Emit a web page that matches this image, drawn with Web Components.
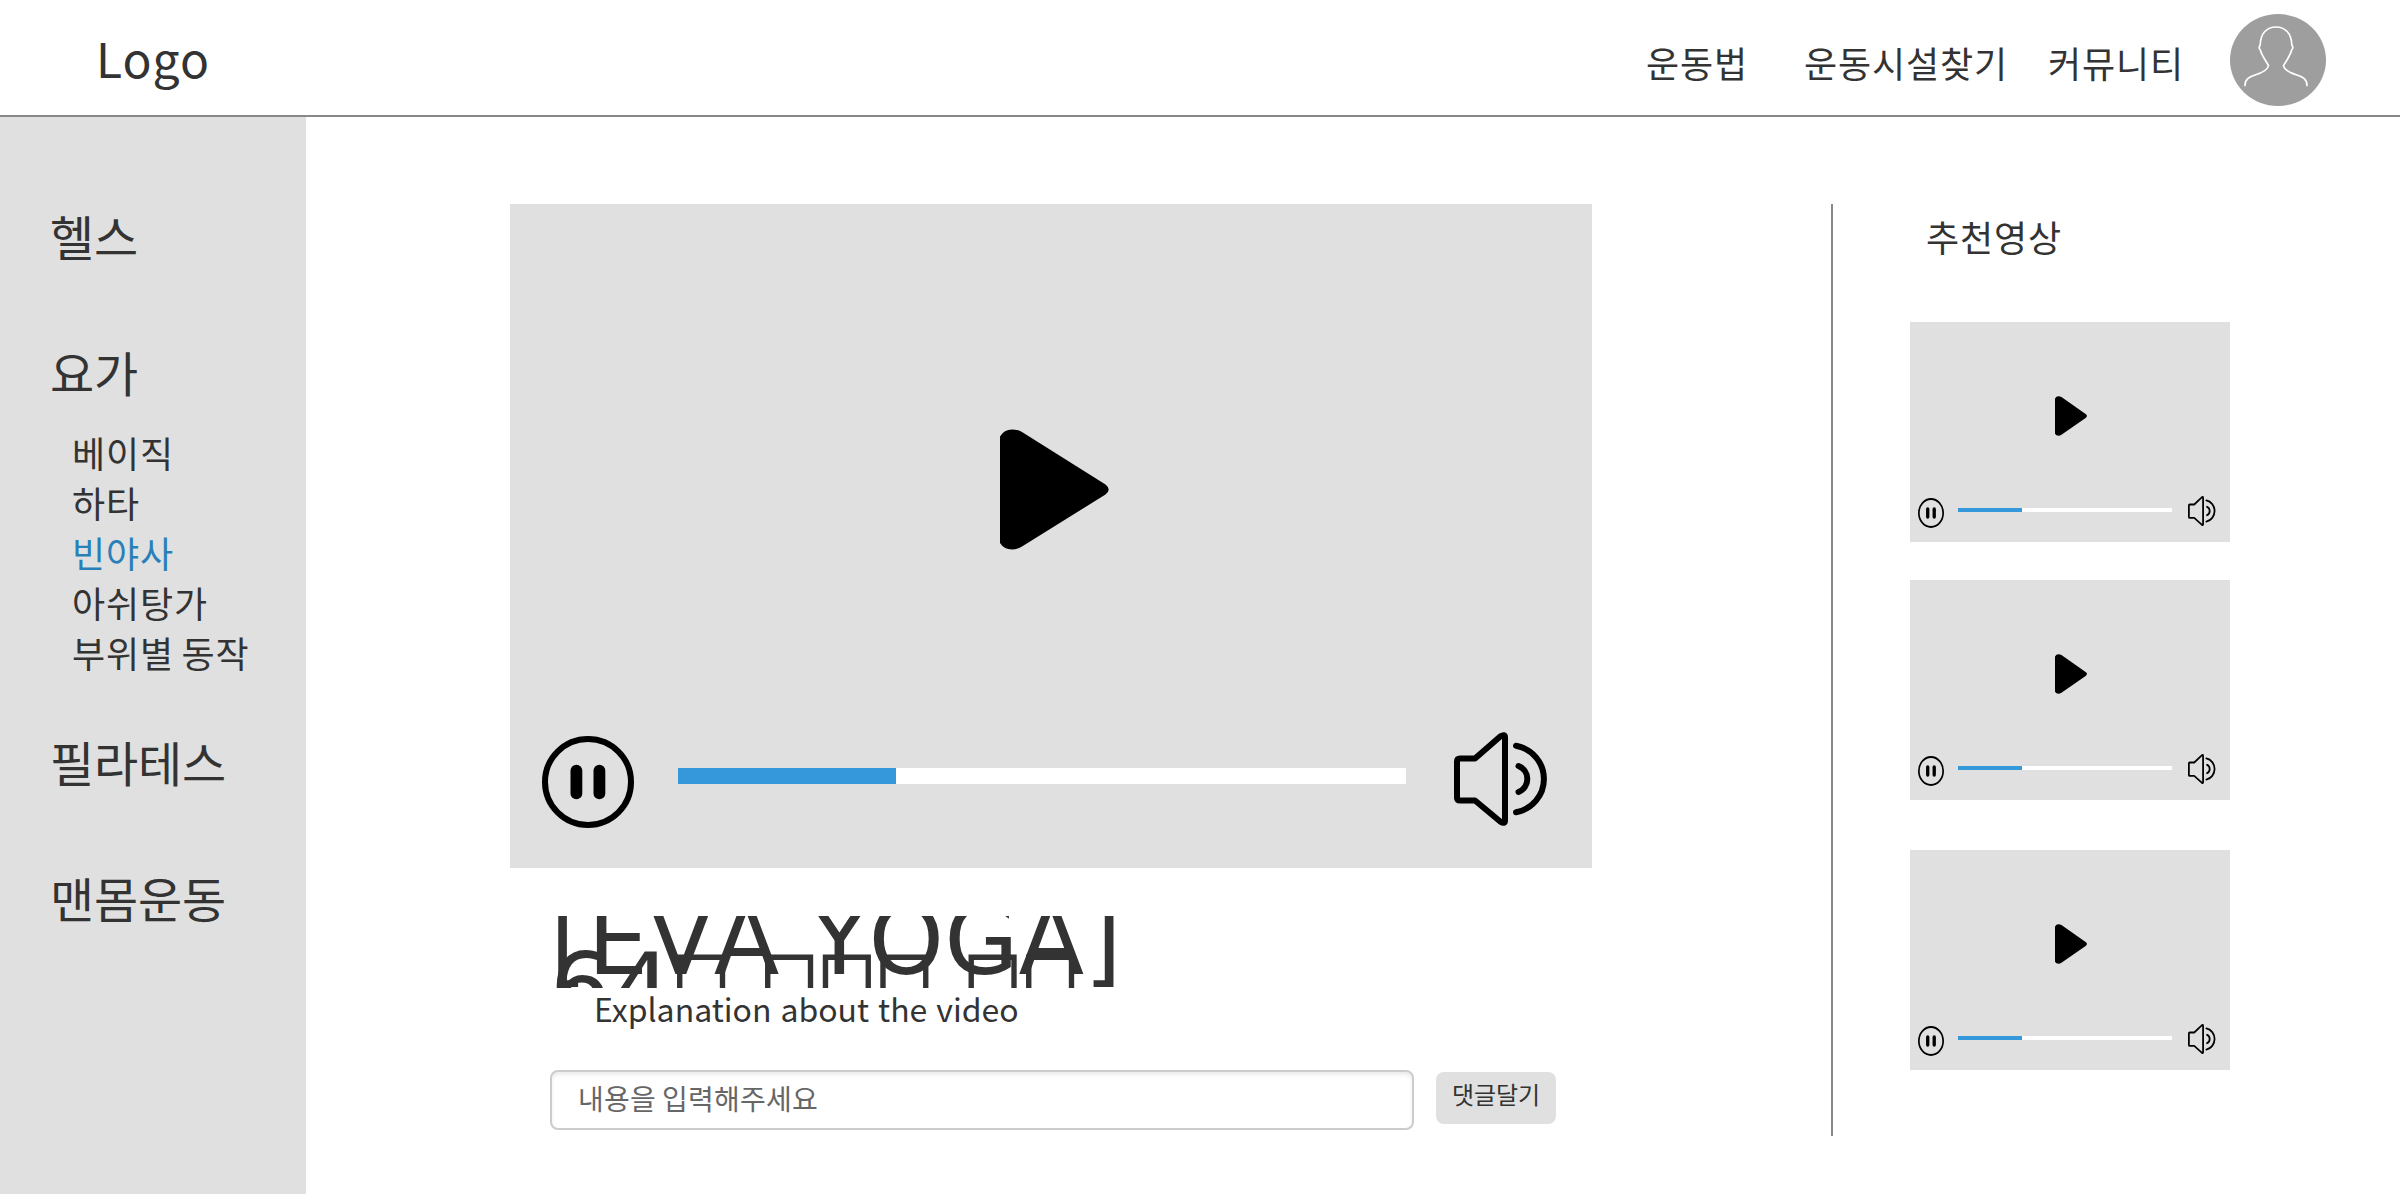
<!DOCTYPE html>
<html lang="ko">
<head>
<meta charset="utf-8">
<title>EVA YOGA</title>
<style>
  body { margin: 0; background: #fff; color: #333; font-family: "Noto Sans CJK KR", sans-serif; }
</style>
</head>
<body>
<yoga-app></yoga-app>
<script>
const define = (name, html) => {
  const tpl = document.createElement('template');
  tpl.innerHTML = html;
  customElements.define(name, class extends HTMLElement {
    constructor() {
      super();
      this.attachShadow({ mode: 'open' }).appendChild(tpl.content.cloneNode(true));
    }
  });
};

define('icon-play', `
<style>:host{display:block} svg{display:block;width:100%;height:100%}</style>
<svg viewBox="0 0 109 121" preserveAspectRatio="none">
  <path d="M0 7.500Q4 .5 12 .5Q17.500 .5 22 3L105.500 55.500Q108.700 58 108.700 60.500Q108.700 63 105.500 65.500L22 117.500Q17.500 120.500 12 120.500Q4 120.500 0 114Z"/>
</svg>`);

define('icon-pause', `
<style>:host{display:block} svg{display:block;width:100%;height:100%}</style>
<svg viewBox="0 0 92 92" preserveAspectRatio="none">
  <circle cx="46" cy="46" r="43" fill="none" stroke="#000" stroke-width="6"/>
  <rect x="28.500" y="28.700" width="11.800" height="34.600" rx="5.900"/>
  <rect x="51.500" y="28.700" width="11.800" height="34.600" rx="5.900"/>
</svg>`);

define('icon-volume', `
<style>:host{display:block} svg{display:block;width:100%;height:100%}</style>
<svg viewBox="0 0 93 94" preserveAspectRatio="none" fill="none" stroke="#000" stroke-width="6" stroke-linecap="round" stroke-linejoin="round">
  <path d="M3 29.500Q3 26.500 6 26.500H21L46.500 4.300Q51 1.500 51 5.500V88.500Q51 92.500 46.500 89.700L21 68.500H6Q3 68.500 3 65.500Z"/>
  <path d="M62 13.800A33.700 33.700 0 0 1 62 80.200"/>
  <path d="M64.500 34A14 14 0 0 1 64.500 60"/>
</svg>`);

define('user-avatar', `
<style>:host{display:block;width:96px;height:92px} svg{display:block}</style>
<svg width="96" height="92" viewBox="0 0 96 92">
  <ellipse cx="48" cy="46" rx="48" ry="46" fill="#9e9e9e"/>
  <path fill="none" stroke="#fff" stroke-width="1.700" stroke-linecap="round" d="M15 71.500C15 65 19 63 25 61C33 58.500 38 55.500 38.500 51.500C36 47 32 42 30.300 36C29 34.500 29 32.500 30.200 31C30.500 19 37 13 46 13C55 13 61.500 19 61.800 31C63 32.500 63 34.500 61.700 36C60 42 56.500 47 53.500 51.500C54 55.500 59 58.500 67 61C73 63 77 65 77 71.500"/>
</svg>`);

define('site-header', `
<style>
  :host{display:flex;height:115px;border-bottom:2px solid #888;white-space:nowrap}
  .logo{font-size:48px;line-height:70px;padding:22px 0 0 96px;flex:1;letter-spacing:1px}
  nav{display:flex;font-size:36px;line-height:52px;padding-top:36px;letter-spacing:.88px}
  nav span{display:block}
  user-avatar{margin:14px 74px 0 0}
</style>
<div class="logo">Logo</div>
<nav>
  <span style="width:158px">운동법</span><span style="width:244px">운동시설찾기</span><span style="width:182px">커뮤니티</span>
</nav>
<user-avatar></user-avatar>`);

define('side-nav', `
<style>
  :host{display:flex;flex-direction:column;width:306px;height:994px;padding-top:83px;box-sizing:content-box;background:#e0e0e0;white-space:nowrap}
  .cat{font-size:48px;line-height:70px;padding-left:50px;margin-bottom:66px;letter-spacing:-.16px}
  .cat.open{margin-bottom:21px}
  ul{list-style:none;margin:0 0 49px;padding:0 0 0 72px;font-size:36px;line-height:50px;letter-spacing:.88px;word-spacing:-3.500px}
  .on{color:#2980b9}
</style>
<div class="cat">헬스</div>
<div class="cat open">요가</div>
<ul><li>베이직</li><li>하타</li><li class="on">빈야사</li><li>아쉬탕가</li><li>부위별 동작</li></ul>
<div class="cat">필라테스</div>
<div class="cat">맨몸운동</div>`);

define('video-player', `
<style>
  :host{display:flex;flex-direction:column;width:1082px;height:664px;background:#e0e0e0}
  .stage{height:346px;padding:225px 0 0 490px;box-sizing:border-box}
  .stage icon-play{width:109px;height:121px}
  .bar{display:flex;align-items:flex-start;padding:182px 0 0 32px}
  icon-pause{width:92px;height:92px;margin:4px 44px 0 0}
  .track{width:728px;height:16px;background:#fff;margin:36px 48px 0 0}
  .fill{width:218px;height:16px;background:#3498db}
  icon-volume{width:93px;height:94px}
</style>
<div class="stage"><icon-play></icon-play></div>
<div class="bar"><icon-pause></icon-pause><div class="track"><div class="fill"></div></div><icon-volume></icon-volume></div>`);

define('video-thumb', `
<style>
  :host{display:flex;flex-direction:column;width:320px;height:220px;background:#e0e0e0}
  .stage{padding:74px 0 0 145px;height:174px;box-sizing:border-box}
  .stage icon-play{width:32px;height:40px}
  .bar{display:flex;align-items:flex-start;padding-left:8px}
  icon-pause{width:26px;height:30px;margin:2px 14px 0 0}
  .track{width:214px;height:4px;background:#fff;margin:12px 16px 0 0}
  .fill{width:64px;height:4px;background:#3498db}
  icon-volume{width:27.500px;height:30px}
</style>
<div class="stage"><icon-play></icon-play></div>
<div class="bar"><icon-pause></icon-pause><div class="track"><div class="fill"></div></div><icon-volume></icon-volume></div>`);

define('video-title', `
<style>
  :host{display:block;box-sizing:border-box;height:72px;padding-top:1px;overflow:hidden;white-space:nowrap;font:96px/48px "DejaVu Sans",sans-serif;font-kerning:none}
  div{height:48px}
</style>
<div>[EVA YOGA]</div><div>64&#xEFF0; &#xEFF0;&#xEFF0;&#xEFF0; &#xEFF0;&#xEFF0;</div>`);

define('comment-form', `
<style>
  :host{display:flex;align-items:flex-start;gap:22px;white-space:nowrap}
  .field{box-sizing:border-box;width:864px;height:60px;border:2px solid #ccc;border-radius:8px;box-shadow:inset 0 3px 5px -1px rgba(0,0,0,.1);padding-left:26px;font-size:28px;line-height:52px;color:#666;letter-spacing:.24px;word-spacing:-2px}
  .btn{width:120px;height:52px;margin-top:2px;border-radius:8px;background:#e0e0e0;font-size:24px;line-height:44px;text-align:center;letter-spacing:-.08px}
</style>
<div class="field">내용을 입력해주세요</div><div class="btn">댓글달기</div>`);

define('related-list', `
<style>
  :host{display:flex;flex-direction:column;box-sizing:border-box;height:932px;border-left:2px solid #888;padding-left:77px;white-space:nowrap}
  h2{margin:0 0 60px;padding:6px 0 0 16px;font-size:36px;line-height:52px;font-weight:400;letter-spacing:.88px}
  video-thumb{margin-bottom:38px}
  video-thumb.wide{margin-bottom:50px}
</style>
<h2>추천영상</h2>
<video-thumb></video-thumb><video-thumb class="wide"></video-thumb><video-thumb></video-thumb>`);

define('yoga-app', `
<style>
  :host{display:block;width:2400px;height:1200px;overflow:hidden}
  .body{display:flex;align-items:flex-start}
  main{width:1082px;margin:87px 239px 0 204px}
  video-title{margin:48px 0 0 40px}
  .desc{padding-left:84px;font-size:32px;line-height:52px;margin-top:-6px;white-space:nowrap}
  comment-form{margin:36px 0 0 40px}
  related-list{margin-top:87px}
</style>
<site-header></site-header>
<div class="body">
  <side-nav></side-nav>
  <main>
    <video-player></video-player>
    <video-title></video-title>
    <div class="desc">Explanation about the video</div>
    <comment-form></comment-form>
  </main>
  <related-list></related-list>
</div>`);
</script>
</body>
</html>
